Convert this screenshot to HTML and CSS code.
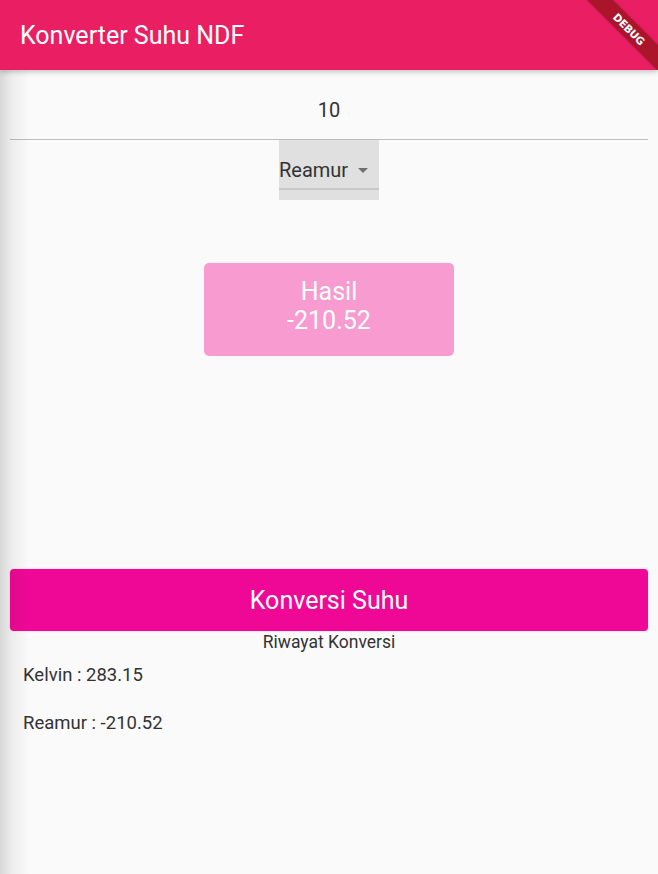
FILE: index.html
```html
<!DOCTYPE html>
<html>
<head>
<meta charset="utf-8">
<link rel="stylesheet" href="styles.css">
</head>
<body>
<header class="appbar">
  <h1 class="title">Konverter Suhu NDF</h1>
  <div class="debug"><span>DEBUG</span></div>
</header>
<main class="content">
  <div class="input-row">10</div>
  <div class="dropdown">
    <div class="dropdown-row">
      <span class="dropdown-label">Reamur</span>
      <svg class="arrow" width="10" height="5" viewBox="0 0 10 5"><path d="M0 0 L10 0 L5 5 Z" fill="#707070"/></svg>
    </div>
  </div>
  <div class="result">
    <div>Hasil</div>
    <div>-210.52</div>
  </div>
  <button class="convert">Konversi Suhu</button>
  <div class="history-title">Riwayat Konversi</div>
  <ul class="history">
    <li>Kelvin : 283.15</li>
    <li>Reamur : -210.52</li>
  </ul>
</main>
<div class="edge-shadow"></div>
</body>
</html>
```
FILE: styles.css
```css
html, body {
  margin: 0;
  padding: 0;
}
body {
  background: #fafafa;
  font-family: Roboto, "Noto Sans", sans-serif;
  color: #212121;
  width: 658px;
  height: 874px;
  overflow: hidden;
  position: relative;
}
.appbar {
  position: relative;
  height: 70px;
  background: #ea1f63;
  display: flex;
  align-items: center;
  padding-left: 20px;
  box-shadow: 0 2px 5px rgba(0,0,0,0.22);
  overflow: hidden;
  z-index: 2;
}
.title {
  margin: 0;
  font-size: 25px;
  font-weight: 400;
  color: #fff;
}
.debug {
  position: absolute;
  top: 20px;
  right: -36px;
  width: 130px;
  height: 18px;
  background: rgba(160, 20, 35, 0.88);
  transform: rotate(45deg);
  display: flex;
  justify-content: center;
  align-items: center;
  box-shadow: 0 0 3px rgba(0,0,0,0.25);
}
.debug span {
  color: #fff;
  font-family: "DejaVu Sans", sans-serif;
  font-weight: 700;
  font-size: 10.5px;
  letter-spacing: -0.3px;
}
.content {
  padding: 0 10px;
  display: flex;
  flex-direction: column;
}
.input-row {
  height: 70px;
  border-bottom: 1px solid #bdbdbd;
  display: flex;
  align-items: center;
  justify-content: center;
  font-size: 20px;
  padding-top: 11px;
  box-sizing: border-box;
  color: #333;
}
.dropdown {
  align-self: center;
  width: 100px;
  height: 60px;
  background: #e0e0e0;
}
.dropdown-row {
  height: 50px;
  border-bottom: 2px solid #c8c8c8;
  display: flex;
  align-items: center;
  justify-content: space-between;
  padding-left: 0;
  padding-right: 11px;
  padding-top: 12px;
  box-sizing: border-box;
}
.dropdown-label {
  font-size: 20px;
  color: #333;
}
.arrow {
  display: block;
  margin-top: 1px;
}
.result {
  align-self: center;
  margin-top: 63px;
  width: 250px;
  height: 93px;
  background: #f79bd1;
  border-radius: 5px;
  color: #fff;
  font-size: 25px;
  line-height: 29px;
  display: flex;
  flex-direction: column;
  align-items: center;
  justify-content: center;
  padding-bottom: 8px;
  box-sizing: border-box;
}
.convert {
  margin-top: 213px;
  height: 62px;
  border: none;
  border-radius: 4px;
  background: #ef0896;
  color: #fff;
  font-family: Roboto, "Noto Sans", sans-serif;
  font-size: 25px;
  padding: 0;
  box-shadow: 0 0 2px rgba(255, 120, 200, 0.5);
}
.history-title {
  text-align: center;
  font-size: 17.5px;
  line-height: 22px;
  color: #333;
}
.history {
  list-style: none;
  margin: 0;
  padding: 0 0 0 13px;
}
.history li {
  font-size: 18.5px;
  line-height: 48px;
  color: #333;
}
.history li:first-child {
  margin-top: -2px;
}
.edge-shadow {
  position: absolute;
  left: 0;
  top: 70px;
  bottom: 0;
  width: 30px;
  background: linear-gradient(to right, rgba(0,0,0,0.14), rgba(0,0,0,0.05) 40%, rgba(0,0,0,0));
  pointer-events: none;
  z-index: 3;
}
```
